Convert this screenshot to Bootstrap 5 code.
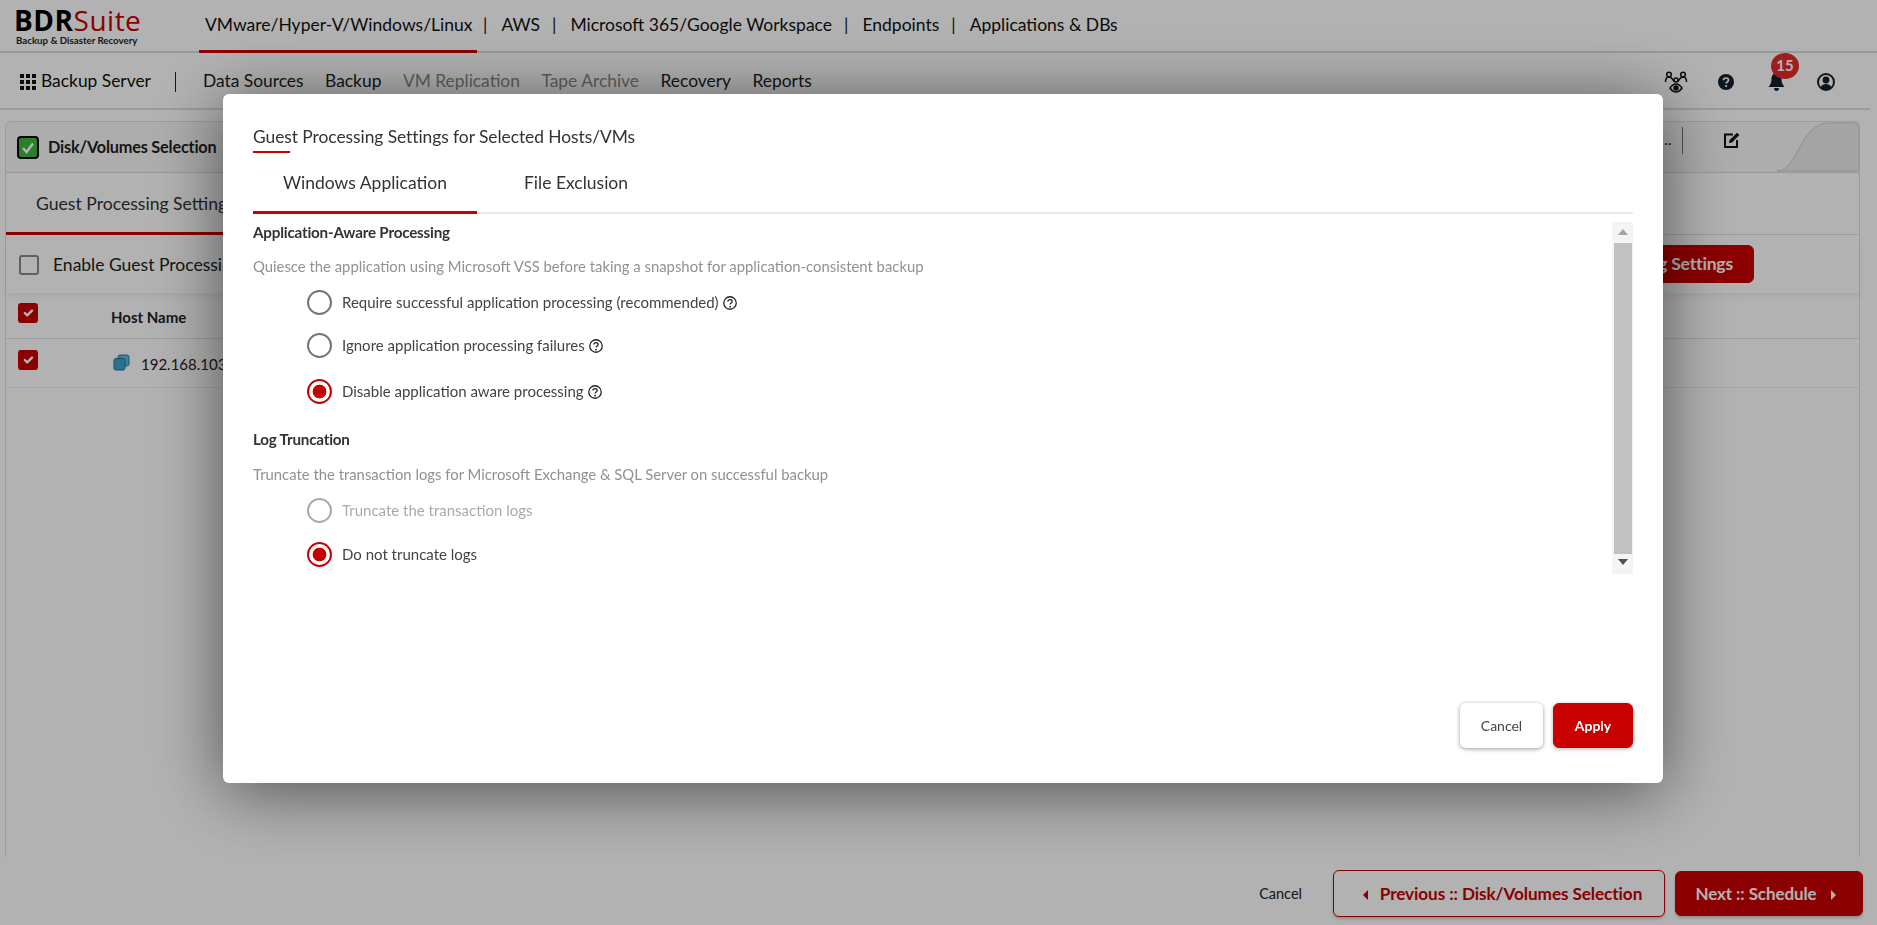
<!DOCTYPE html>
<html lang="en">
<head>
<meta charset="utf-8">
<title>BDRSuite</title>
<link href="https://cdn.jsdelivr.net/npm/bootstrap@5.3.0/dist/css/bootstrap.min.css" rel="stylesheet">
<style>
html,body{height:100%}
body{font-family:"Lato","Liberation Sans",sans-serif;background:#fff;color:#212529;overflow:hidden;font-size:16px}
.shell{height:925px;display:flex;flex-direction:column}
.topbar{height:53px;border-bottom:2px solid #dcdcdc;padding-left:14px}
.logo-box{width:185px;flex:none;padding-top:8px}
.logo-main{font-size:28px;line-height:24px;font-weight:700;color:#000;letter-spacing:.5px;font-family:"Open Sans","Lato",sans-serif}
.logo-main span{color:#c80000;font-weight:400}
.logo-sub{font-size:9.7px;font-weight:700;line-height:12px;margin:2px 0 0 2px;white-space:nowrap;color:#222}
.prod-nav{font-size:17.5px;color:#111}
.prod-item{display:block;height:53px;line-height:50px;padding:0 6px;color:#111;text-decoration:none;white-space:nowrap}
.prod-item.on{border-bottom:3px solid #c80000;width:278px}
.prod-sep{line-height:50px;padding:0 8px 0 6px}
.subbar{height:57px;border-bottom:2px solid #dedede;margin-right:7px;padding:2px 0 0 20px;font-size:17.4px}
.sub-title{margin-left:5px;color:#111}
.sub-div{width:1px;height:20px;background:#222;margin:0 27px 0 24px}
.sub-link{color:#1c1c1c;text-decoration:none;margin-right:21.5px;white-space:nowrap}
.sub-link.off{color:#8a8a8a}
.sub-icons{margin-left:auto;padding-right:19px;display:flex;align-items:center;flex:none;position:relative}
.icon-slot{width:50px;display:flex;justify-content:center;flex:none}
.bell-badge{position:absolute;top:-18px;left:120px;width:28px;height:26px;border-radius:50%;background:#e22b2b;color:#fff;font-size:15px;font-weight:700;display:flex;align-items:center;justify-content:center;line-height:1;border:0;padding:0}
.work{margin:11px 17px 0 5px;flex:1;min-height:0;border:1px solid #e0e0e0;border-bottom:0;border-radius:6px 6px 0 0;display:flex;flex-direction:column}
.step-strip{height:51px;flex:none;border-bottom:1px solid #dadada;padding-left:11px;position:relative;background:#f8f8f8;border-radius:6px 6px 0 0}
.step-name{font-size:16.3px;font-weight:700;margin-left:9px;color:#222;letter-spacing:-.2px}
.step-end{position:absolute;left:1658px;top:5px;height:27px;border-right:1px solid #777;width:19px;font-size:16px}
.step-edit{position:absolute;left:1717px;top:10px}
.step-curve{position:absolute;right:0;top:0}
.tab-row{height:62px;flex:none;border-bottom:1px solid #e0e0e0}
.tab-one{display:block;width:300px;height:62px;border-bottom:3px solid #c80000;padding:18px 0 0 30px;font-size:17.6px;color:#333;text-decoration:none;white-space:nowrap}
.tool-row{height:58px;flex:none;padding:2px 105px 0 13px;box-shadow:0 4px 6px rgba(0,0,0,.06);font-size:17.5px}
.tool-row label{margin-left:14px;color:#222}
.box-check.form-check-input{width:20px;height:20px;margin:0;border:2px solid #8a8a8a;border-radius:3px;flex:none}
.box-check.form-check-input:checked{background-color:#c80000;border-color:#c80000}
.btn-red.btn{--bs-btn-bg:#c80000;--bs-btn-border-color:#c80000;--bs-btn-color:#fff;font-weight:700;font-size:17px;--bs-btn-hover-bg:#c80000;--bs-btn-hover-color:#fff}
.tool-btn.btn{height:38px;padding:0 20px;font-size:17.6px;letter-spacing:-.2px;margin-top:-2px}
.host-table.table{margin:2px 0 0;--bs-table-bg:transparent}
.host-table th{height:43px;padding:11px 12px 0;border-bottom:1px solid #e2e2e2;font-size:15px;vertical-align:top;color:#222}
.host-table td{height:49px;padding:14px 12px 0;border-bottom:1px solid #eee;font-size:15px;vertical-align:top;color:#222}
.host-table .cbcell{width:93px;padding-top:8px}
.host-table td.cbcell{padding-top:11px}
.host-table .cbcell .box-check{display:block}
.host-pic{margin:-6px 0 0 2px}
.host-ip{margin-left:11px}
.foot{height:68px;flex:none;margin-right:6px;padding:5px 8px 0 0;background:#fff;font-size:16px}
.foot-cancel{font-size:14.5px;color:#222;margin-right:31px;text-decoration:none}
.foot-prev.btn{--bs-btn-color:#c80000;--bs-btn-border-color:#c80000;--bs-btn-hover-color:#c80000;--bs-btn-hover-bg:transparent;width:332px;height:47px;font-weight:700;font-size:17.2px;background:#fff;box-shadow:0 2px 3px rgba(0,0,0,.2);margin-right:10px;padding:0 0 0 7px;letter-spacing:-.1px;white-space:nowrap}
.foot-next.btn{width:188px;height:45px;padding:0 7px 0 0;box-shadow:0 2px 3px rgba(0,0,0,.2);white-space:nowrap;letter-spacing:-.1px}
.tri-left,.tri-right{display:inline-block;width:0;height:0;border-top:5px solid transparent;border-bottom:5px solid transparent;vertical-align:0}
.tri-left{border-right:5px solid #c80000;margin-right:12px}
.tri-right{border-left:5px solid #fff;margin-left:14px}
.veil.modal-backdrop{--bs-backdrop-opacity:.3}
.gp-modal.modal{display:block;overflow:hidden}
.gp-dialog.modal-dialog{max-width:none;width:1440px;margin:94px 0 0 223px}
.gp-content.modal-content{height:689px;border:0;border-radius:6px;box-shadow:0 8px 70px rgba(0,0,0,.55);padding:0 30px 0 30px;display:block}
.gp-title{font-size:17.4px;line-height:22px;color:#333;padding-top:32px;margin:0;font-weight:400;letter-spacing:-.05px}
.gp-rule{width:37px;height:2px;background:#c80000;margin-top:3px}
.gp-tabs{height:61px;border-bottom:2px solid #e9e9e9;display:flex;margin:0}
.gp-tab{height:61px;line-height:59px;font-size:17.5px;color:#333;text-decoration:none;padding:0 30px;white-space:nowrap}
.gp-tab.on{width:224px;border-bottom:3px solid #c80000;margin-right:47px}
.gp-tab.plain{padding:0}
.gp-scroll{display:flex;height:352px;margin-top:8px}
.gp-form{flex:1;min-width:0}
.gp-head{font-size:15.2px;line-height:22px;font-weight:700;color:#333;margin:-1px 0 0;letter-spacing:-.2px}
.gp-head.second{margin-top:24px}
.gp-note{font-size:14.85px;line-height:20px;color:#919191;margin:13px 0 0}
.gp-note.second{margin-top:14px}
.gp-opt{display:flex;align-items:center;margin:0 0 0 54px;height:25px;font-size:15px;color:#444}
.gp-opt.off{color:#aaa}
.gp-opt svg{margin-left:4px}
.gp-opt .form-check-input{width:25px;height:25px;margin:0 10px 0 0;flex:none;border:2px solid #757575;background-image:none}
.gp-opt .form-check-input:checked{border-color:#c80000;background:radial-gradient(circle,#c80000 0 6.5px,#fff 7.2px)}
.gp-opt .form-check-input:disabled{opacity:1;border-color:#aaa}
.mt-a{margin-top:14px}.mt-b{margin-top:18px}.mt-c{margin-top:21px}.mt-d{margin-top:19px}
.gp-bar{width:21px;background:#f4f4f4;flex:none;display:flex;flex-direction:column;align-items:center;position:relative}
.gp-thumb{width:18px;height:311px;background:#c1c1c1;margin:0}
.gp-arrow{width:0;height:0;border-left:5px solid transparent;border-right:5px solid transparent;margin:7px 0 8px}
.gp-arrow.up{border-bottom:6px solid #a3a3a3}
.gp-arrow.down{border-top:6px solid #505050;margin-top:5px}
.gp-actions{margin-top:129px;justify-content:flex-end;display:flex;gap:10px}
.gp-cancel.btn{width:83px;height:45px;font-size:14px;color:#444;background:#fff;border:0;box-shadow:0 1px 4px rgba(0,0,0,.4);padding:0}
.gp-apply.btn{width:80px;height:45px;font-size:14px;padding:0;box-shadow:0 1px 4px rgba(0,0,0,.3)}
</style>
</head>
<body>
<div class="shell">
  <header class="topbar d-flex align-items-start">
    <div class="logo-box">
      <div class="logo-main">BDR<span>Suite</span></div>
      <div class="logo-sub">Backup &amp; Disaster Recovery</div>
    </div>
    <nav class="prod-nav d-flex">
      <a class="prod-item on" href="#">VMware/Hyper-V/Windows/Linux</a>
      <span class="prod-sep">|</span><a class="prod-item" href="#">AWS</a>
      <span class="prod-sep">|</span><a class="prod-item" href="#">Microsoft 365/Google Workspace</a>
      <span class="prod-sep">|</span><a class="prod-item" href="#">Endpoints</a>
      <span class="prod-sep">|</span><a class="prod-item" href="#">Applications &amp; DBs</a>
    </nav>
  </header>

  <div class="subbar d-flex align-items-center">
    <svg width="16" height="16" viewBox="0 0 16 16" fill="#111"><rect width="4" height="4"/><rect x="6" width="4" height="4"/><rect x="12" width="4" height="4"/><rect y="6" width="4" height="4"/><rect x="6" y="6" width="4" height="4"/><rect x="12" y="6" width="4" height="4"/><rect y="12" width="4" height="4"/><rect x="6" y="12" width="4" height="4"/><rect x="12" y="12" width="4" height="4"/></svg>
    <span class="sub-title">Backup Server</span>
    <span class="sub-div"></span>
    <a class="sub-link" href="#">Data Sources</a>
    <a class="sub-link" href="#">Backup</a>
    <a class="sub-link off" href="#">VM Replication</a>
    <a class="sub-link off" href="#">Tape Archive</a>
    <a class="sub-link" href="#">Recovery</a>
    <a class="sub-link" href="#">Reports</a>
    <div class="sub-icons">
      <span class="icon-slot"><svg width="24" height="22" viewBox="0 0 24 22" fill="none" stroke="#111" stroke-width="1.5"><circle cx="5" cy="3.500" r="2.300"/><circle cx="19" cy="3.500" r="2.300"/><path d="M1.500 11c0-3 1.500-5 3.500-5s3 1 4 3l2 2M22.500 11c0-3-1.500-5-3.500-5s-3 1-4 3l-2 2"/><circle cx="12" cy="9" r="2"/><path d="M6 17c2-3 4-4 6-4s4 1 6 4c-2 3-4 4-6 4s-4-1-6-4z"/><circle cx="12" cy="17" r="2" fill="#111"/></svg></span>
      <span class="icon-slot"><svg width="16" height="16" viewBox="0 0 16 16"><circle cx="8" cy="8" r="8" fill="#14202c"/><path d="M5.500 6.200C5.500 4.800 6.600 4 8 4s2.500.8 2.500 2.100c0 1.900-2.300 1.800-2.300 3.500" fill="none" stroke="#fff" stroke-width="1.700"/><circle cx="8.100" cy="12" r="1.100" fill="#fff"/></svg></span>
      <span class="icon-slot"><svg width="17" height="18" viewBox="0 0 17 18" fill="#14202c"><path d="M8.500 0C5 0 3.500 3 3.500 6c0 4-1.500 6-3 8h16c-1.500-2-3-4-3-8 0-3-1.500-6-5-6zM6 15h5c0 1.700-1 3-2.500 3S6 16.700 6 15z"/></svg></span>
      <span class="icon-slot"><svg width="18" height="18" viewBox="0 0 18 18"><circle cx="9" cy="9" r="8" fill="#fff" stroke="#14202c" stroke-width="2"/><circle cx="9" cy="7" r="3.400" fill="#14202c"/><path d="M3.500 14.500C4.500 12 6.500 11 9 11s4.500 1 5.500 3.500C13 16.200 11 17 9 17s-4-.8-5.500-2.500z" fill="#14202c"/></svg></span>
      <span class="badge bell-badge">15</span>
    </div>
  </div>

  <section class="work">
    <div class="step-strip d-flex align-items-center">
      <svg width="22" height="23" viewBox="0 0 22 23"><rect x="1" y="1" width="20" height="21" rx="3" fill="#3fb53f" stroke="#0a0a0a" stroke-width="2"/><path d="M6 12l3.500 4L16 7.500" fill="none" stroke="#fff" stroke-width="2.400"/></svg>
      <span class="step-name">Disk/Volumes Selection</span>
      <span class="step-end">..</span>
      <svg class="step-edit" width="18" height="16" viewBox="0 0 18 16" fill="none"><path d="M10 2.500H2v12.500h12V8" stroke="#111" stroke-width="2"/><path d="M6 11l.6-3L14 .7l2.400 2.400L9 10.400z" fill="#111"/></svg>
      <svg class="step-curve" width="82" height="50" viewBox="0 0 82 50"><path d="M0 49c22 0 22-48 52-48h24q6 0 6 5v43z" fill="#ebebeb" stroke="#cfcfcf"/></svg>
    </div>
    <div class="tab-row"><a class="tab-one" href="#">Guest Processing Settings</a></div>
    <div class="tool-row d-flex align-items-center justify-content-between">
      <div class="d-flex align-items-center"><input class="form-check-input box-check" type="checkbox" id="enGuest"><label for="enGuest">Enable Guest Processing</label></div>
      <button class="btn btn-red tool-btn" type="button">Guest Processing Settings</button>
    </div>
    <table class="table host-table">
      <thead><tr><th class="cbcell"><input class="form-check-input box-check" type="checkbox" checked aria-label="all"></th><th>Host Name</th></tr></thead>
      <tbody><tr><td class="cbcell"><input class="form-check-input box-check" type="checkbox" checked aria-label="host"></td><td><svg class="host-pic" width="17" height="17" viewBox="0 0 17 17"><rect x="5" y="1" width="11" height="11" rx="2" fill="#55bcd8" stroke="#2f7ea6"/><rect x="1" y="4.500" width="11" height="11.500" rx="2" fill="#3aa5cf" stroke="#2b6f99"/></svg><span class="host-ip">192.168.103.21</span></td></tr></tbody>
    </table>
  </section>

  <footer class="foot d-flex align-items-center justify-content-end">
    <a class="foot-cancel" href="#">Cancel</a>
    <button class="btn foot-prev" type="button"><span class="tri-left"></span>Previous :: Disk/Volumes Selection</button>
    <button class="btn btn-red foot-next" type="button">Next :: Schedule<span class="tri-right"></span></button>
  </footer>
</div>

<div class="modal-backdrop show veil"></div>
<div class="modal gp-modal" role="dialog">
  <div class="modal-dialog gp-dialog">
    <div class="modal-content gp-content">
      <h5 class="gp-title">Guest Processing Settings for Selected Hosts/VMs</h5>
      <div class="gp-rule"></div>
      <div class="gp-tabs">
        <a class="gp-tab on" href="#">Windows Application</a>
        <a class="gp-tab plain" href="#">File Exclusion</a>
      </div>
      <div class="gp-scroll">
        <div class="gp-form">
          <p class="gp-head">Application-Aware Processing</p>
          <p class="gp-note">Quiesce the application using Microsoft VSS before taking a snapshot for application-consistent backup</p>
          <label class="gp-opt mt-a"><input class="form-check-input" type="radio" name="ap">Require successful application processing (recommended)<svg width="14" height="14" viewBox="0 0 13 13"><circle cx="6.500" cy="6.500" r="5.800" fill="none" stroke="#222" stroke-width="1.200"/><path d="M4.500 5.200c0-1.200.9-1.800 2-1.800s2 .7 2 1.700c0 1.400-1.900 1.300-1.900 2.700" fill="none" stroke="#222" stroke-width="1.200"/><circle cx="6.600" cy="9.900" r=".8" fill="#222"/></svg></label>
          <label class="gp-opt mt-b"><input class="form-check-input" type="radio" name="ap">Ignore application processing failures<svg width="14" height="14" viewBox="0 0 13 13"><circle cx="6.500" cy="6.500" r="5.800" fill="none" stroke="#222" stroke-width="1.200"/><path d="M4.500 5.200c0-1.200.9-1.800 2-1.800s2 .7 2 1.700c0 1.400-1.900 1.300-1.900 2.700" fill="none" stroke="#222" stroke-width="1.200"/><circle cx="6.600" cy="9.900" r=".8" fill="#222"/></svg></label>
          <label class="gp-opt mt-c"><input class="form-check-input" type="radio" name="ap" checked>Disable application aware processing<svg width="14" height="14" viewBox="0 0 13 13"><circle cx="6.500" cy="6.500" r="5.800" fill="none" stroke="#222" stroke-width="1.200"/><path d="M4.500 5.200c0-1.200.9-1.800 2-1.800s2 .7 2 1.700c0 1.400-1.900 1.300-1.900 2.700" fill="none" stroke="#222" stroke-width="1.200"/><circle cx="6.600" cy="9.900" r=".8" fill="#222"/></svg></label>
          <p class="gp-head second">Log Truncation</p>
          <p class="gp-note second">Truncate the transaction logs for Microsoft Exchange &amp; SQL Server on successful backup</p>
          <label class="gp-opt off mt-a"><input class="form-check-input" type="radio" name="lg" disabled>Truncate the transaction logs</label>
          <label class="gp-opt mt-d"><input class="form-check-input" type="radio" name="lg" checked>Do not truncate logs</label>
        </div>
        <div class="gp-bar">
          <span class="gp-arrow up"></span>
          <span class="gp-thumb"></span>
          <span class="gp-arrow down"></span>
        </div>
      </div>
      <div class="gp-actions">
        <button class="btn gp-cancel" type="button">Cancel</button>
        <button class="btn btn-red gp-apply" type="button">Apply</button>
      </div>
    </div>
  </div>
</div>
<script src="https://cdn.jsdelivr.net/npm/bootstrap@5.3.0/dist/js/bootstrap.bundle.min.js"></script>
</body>
</html>
